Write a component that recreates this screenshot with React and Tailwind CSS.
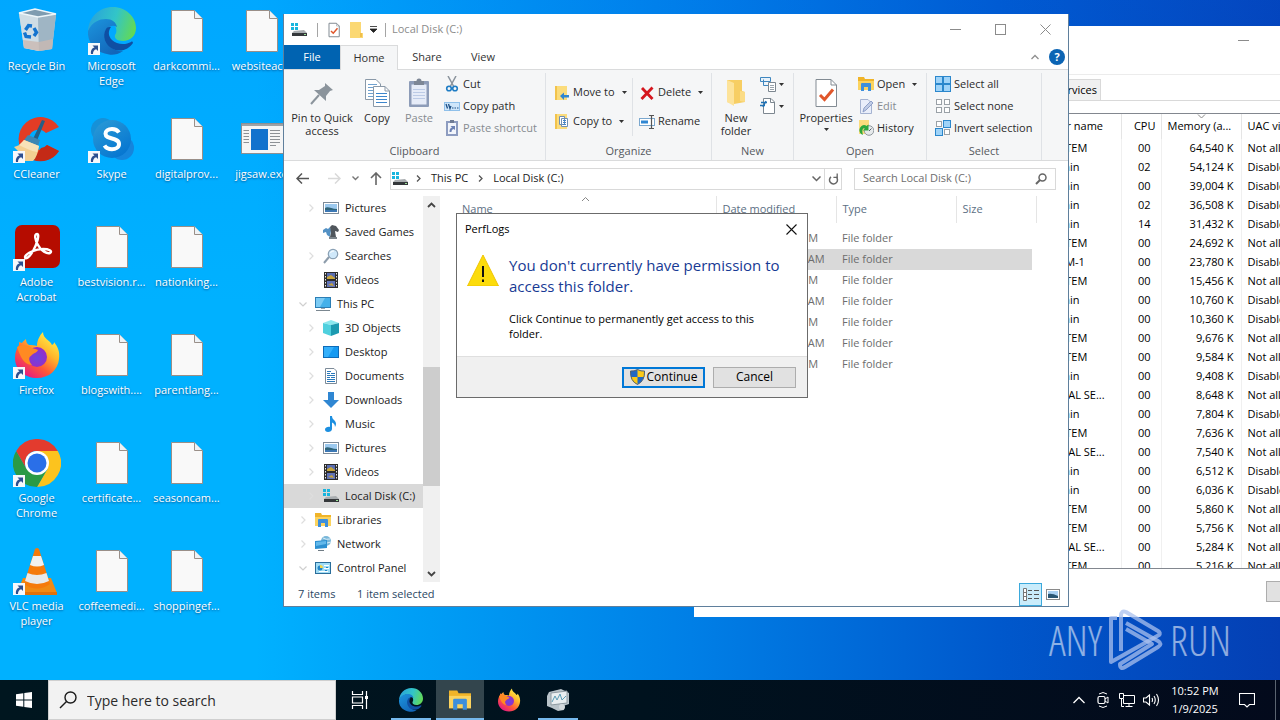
import React, { useState } from 'react';

const svgProps = { xmlns: 'http://www.w3.org/2000/svg', fill: 'none', 'aria-hidden': true };

/* ---------- desktop icons ---------- */

const RecycleBin = () => (
  <svg {...svgProps} width="48" height="48" viewBox="0 0 48 48">
    <path d="M6 6 L22 2 L43 7 L39 42 L26 44 L11 41 Z" fill="#b9cfdc" />
    <path d="M6 6 L25 10 L26 44 L11 41 Z" fill="#cfdde5" />
    <path d="M25 10 L43 7 L39 42 L26 44 Z" fill="#9fb5c4" />
    <path d="M10 33 L26 35 L40 32 L39 42 L26 44 L11 41 Z" fill="#c9b9b2" opacity=".8" />
    <path d="M6 6 L22 2 L43 7 L25 10 Z" fill="#7f9cb0" stroke="#eef6fa" strokeWidth="1.3" />
    <g stroke="#1474cf" strokeWidth="3.4">
      <path d="M12.500 23 L15.500 18.500 L19 19" />
      <path d="M21 21 L23.500 25.500 L21 29" />
      <path d="M18 30 L13 29.500 L11.500 25.500" />
    </g>
  </svg>
);

const EdgeLogo = ({ size = 48 }) => (
  <svg {...svgProps} width={size} height={size} viewBox="0 0 48 48">
    <defs>
      <linearGradient id="edgeTop" x1="4" y1="10" x2="46" y2="24" gradientUnits="userSpaceOnUse">
        <stop offset="0" stopColor="#2aa7d8" />
        <stop offset=".5" stopColor="#32c5c8" />
        <stop offset="1" stopColor="#62d957" />
      </linearGradient>
      <linearGradient id="edgeLeft" x1="4" y1="16" x2="26" y2="46" gradientUnits="userSpaceOnUse">
        <stop offset="0" stopColor="#1b8fd9" />
        <stop offset="1" stopColor="#1266b9" />
      </linearGradient>
    </defs>
    <path d="M0 24 C1 10 11 0 25 0 C38 0 48 10 48 21 C48 29 42 34 35 34 C29 34 26 31 27 28 C29 26 29 21 26 17 C21 11 8 11 0 24 Z" fill="url(#edgeTop)" />
    <path d="M0 24 C4 15 11 12 18 12 C24 12 28 15 29 20 C23 16 16 22 18 31 C20 40 28 45 35 44 C30 48 24 48 21 47.500 C8 46 -1 36 0 24 Z" fill="url(#edgeLeft)" />
    <path d="M18 22 C14 29 17 38 25 42 C33 46 41 42 45 36 C45 35 44 34 43 35 C38 38 29 38 24 33 C20 29 20 24 23 20 C21 20 19 20 18 22 Z" fill="#0f4fa3" />
  </svg>
);

const CCleaner = () => (
  <svg {...svgProps} width="48" height="48" viewBox="0 0 48 48">
    <path d="M46 12 A22 22 0 1 0 46 36 L34 30 A10 10 0 1 1 33 18 Z" fill="#e23c25" />
    <path d="M46 36 A22 22 0 0 1 20 45 L28 33 A10 10 0 0 0 34 30 Z" fill="#c42a17" />
    <path d="M29 5 L32 6 L23 28 L19 26 Z" fill="#245f86" />
    <path d="M15 20 L27 25 L25 31 L11 25 Z" fill="#3c87b4" />
    <path d="M11 25 L26 31 C25 38 23 43 20 46 L12 46 L5 36 L1 32 C5 31 9 29 11 25 Z" fill="#f3cf92" />
    <path d="M11 25 L26 31 L24 37 C18 36 12 33 6 30 Z" fill="#f8e2b8" />
  </svg>
);

const Skype = () => (
  <svg {...svgProps} width="48" height="48" viewBox="0 0 48 48">
    <defs>
      <linearGradient id="skypeFill" x1="10" y1="4" x2="38" y2="44" gradientUnits="userSpaceOnUse">
        <stop offset="0" stopColor="#2a9ad6" />
        <stop offset="1" stopColor="#0272d0" />
      </linearGradient>
    </defs>
    <circle cx="15" cy="15" r="12" fill="#1691d8" />
    <circle cx="34" cy="33" r="12" fill="#1585dc" />
    <circle cx="24" cy="24" r="19" fill="url(#skypeFill)" />
    <path d="M31 17.500 C29 14.500 26 14 24 14 C20 14 17.500 16 17.500 18.800 C17.500 25 31 22 31 29 C31 32.500 27.500 34.200 24 34.200 C20.500 34.200 18 33 16.500 30.500" stroke="#fff" strokeWidth="4" />
  </svg>
);

const Acrobat = () => (
  <svg {...svgProps} width="48" height="48" viewBox="0 0 48 48">
    <rect x="2" y="2" width="45" height="43" rx="7" fill="#b50c00" />
    <path d="M24 11 C21 11 22 17 25 22 C28 28 34 31 37 30 C40 28 36 26 30 26 C23 26 13 30 12 34 C12 37 16 35 20 28 C24 21 27 11 24 11 Z" stroke="#fff" strokeWidth="2.400" strokeLinejoin="round" />
  </svg>
);

const FirefoxLogo = ({ size = 48 }) => (
  <svg {...svgProps} width={size} height={size} viewBox="0 0 48 48">
    <defs>
      <linearGradient id="ffBody" x1="42" y1="6" x2="12" y2="46" gradientUnits="userSpaceOnUse">
        <stop offset="0" stopColor="#fff24a" />
        <stop offset=".35" stopColor="#ffb52b" />
        <stop offset=".65" stopColor="#ff5a36" />
        <stop offset="1" stopColor="#e31587" />
      </linearGradient>
      <radialGradient id="ffCore" cx="24" cy="27" r="11" gradientUnits="userSpaceOnUse">
        <stop offset="0" stopColor="#6a45e0" />
        <stop offset="1" stopColor="#9a2bc4" />
      </radialGradient>
    </defs>
    <path d="M30 1 C30 8 37 9 39 14 C41 13 41 12 41 11 C45 16 47 21 46 28 C45 39 36 47 24 47 C12 47 2 39 2 27 C2 21 4 17 6 14 L6 11 L9 12 C10 10 12 9 13 8 C13 11 14 13 16 14 C19 14 21 14 24 15 C24 9 27 4 30 1 Z" fill="url(#ffBody)" />
    <circle cx="24" cy="26" r="10" fill="url(#ffCore)" />
    <path d="M4 16 C10 13 16 14 19 17 C21 18 24 18 25 19 C24 22 20 22 18 25 C15 26 16 31 19 34 C11 34 7 25 4 16 Z" fill="#ff8a22" />
  </svg>
);

const ChromeLogo = () => (
  <svg {...svgProps} width="48" height="48" viewBox="0 0 48 48">
    <path d="M24 12 L44.800 12 A24 24 0 0 1 24 48 L34.400 30 Z" fill="#fcc31e" />
    <path d="M3.200 12 L13.600 30 L24 36 L34.400 30 L24 48 A24 24 0 0 1 3.200 12 Z" fill="#2a9a46" />
    <path d="M3.200 12 L13.600 30 A12 12 0 0 1 24 12 L44.800 12 A24 24 0 0 0 3.200 12 Z" fill="#e33b2e" />
    <circle cx="24" cy="24" r="12" fill="#fff" />
    <circle cx="24" cy="24" r="9.500" fill="#2a6fe8" />
  </svg>
);

const VlcLogo = () => (
  <svg {...svgProps} width="48" height="48" viewBox="0 0 48 48">
    <path d="M10 31 L38 31 L44 46 L4 46 Z" fill="#f08a14" />
    <path d="M4 45 H44 V48 H4 Z" fill="#e0710a" />
    <path d="M22 2 Q24 0 26 2 L37 37 Q24 46 11 37 Z" fill="#f57a0b" />
    <path d="M20 9 L28 9 L31 18 Q24 21 17 18 Z" fill="#f1f1f1" />
    <path d="M14.500 26 Q24 30 33.500 26 L36 34 Q24 40 12 34 Z" fill="#e9e9e9" />
  </svg>
);

const FilePage = () => (
  <svg {...svgProps} width="48" height="48" viewBox="0 0 48 48">
    <path d="M8.500 3.500 H31 L39.500 12 V44.500 H8.500 Z" fill="#f9f9f9" stroke="#9a8f88" />
    <path d="M31.500 3.500 V11.500 H39.500" fill="#eef2f5" stroke="#9a8f88" />
  </svg>
);

const ExeWindow = () => (
  <svg {...svgProps} width="48" height="48" viewBox="0 0 48 48">
    <rect x="3.500" y="8.500" width="42" height="30" fill="#f5f5f5" stroke="#8b8f93" />
    <path d="M4 9 H45 V11 H4 Z" fill="#9da2a6" />
    <rect x="13" y="14" width="17" height="21" fill="#1272cd" />
    <path d="M5.500 15.500 H11 M5.500 18.500 H11 M5.500 21.500 H11 M5.500 24.500 H11 M5.500 27.500 H11 M32 15.500 H42 M32 18.500 H42 M32 21.500 H42 M32 24.500 H42 M32 27.500 H42 M32 30.500 H38" stroke="#8d9195" />
  </svg>
);

const ShortcutArrow = () => (
  <svg {...svgProps} className="absolute bottom-0 left-0" width="12" height="12" viewBox="0 0 12 12">
    <rect width="12" height="12" fill="#f6f8fb" />
    <path d="M3 11 C2.500 7.500 4 5 6.500 4.500 L4.500 2.500 H10 V8 L8.200 6.200 C6 6.700 5 8.500 5 11 Z" fill="#2d4f8f" />
  </svg>
);

const desktopItems = [
  { name: 'Recycle Bin', icon: RecycleBin },
  { name: 'CCleaner', icon: CCleaner, shortcut: true },
  { name: 'Adobe\nAcrobat', icon: Acrobat, shortcut: true },
  { name: 'Firefox', icon: FirefoxLogo, shortcut: true },
  { name: 'Google\nChrome', icon: ChromeLogo, shortcut: true },
  { name: 'VLC media\nplayer', icon: VlcLogo, shortcut: true },
  { name: 'Microsoft\nEdge', icon: EdgeLogo, shortcut: true },
  { name: 'Skype', icon: Skype, shortcut: true },
  { name: 'bestvision.r...', icon: FilePage },
  { name: 'blogswith....', icon: FilePage },
  { name: 'certificate...', icon: FilePage },
  { name: 'coffeemedi...', icon: FilePage },
  { name: 'darkcommi...', icon: FilePage },
  { name: 'digitalprov...', icon: FilePage },
  { name: 'nationking...', icon: FilePage },
  { name: 'parentlang...', icon: FilePage },
  { name: 'seasoncam...', icon: FilePage },
  { name: 'shoppingef...', icon: FilePage },
  { name: 'websiteac...', icon: FilePage },
  { name: 'jigsaw.exe', icon: ExeWindow },
];

const DesktopIcons = () => (
  <div className="grid w-max auto-cols-[75px] grid-flow-col grid-rows-[repeat(6,108px)]">
    {desktopItems.map(({ name, icon: Icon, shortcut }) => (
      <button key={name} className="flex flex-col items-center pt-[7px] pr-0.5 text-[11px] leading-[15px] text-white">
        <span className="relative mb-[3px] block">
          <Icon />
          {shortcut && <ShortcutArrow />}
        </span>
        <span className="text-center whitespace-pre [text-shadow:0_1px_2px_rgba(0,30,80,0.6)]">{name}</span>
      </button>
    ))}
  </div>
);

/* ---------- explorer icons ---------- */

const Drive = () => (
  <svg {...svgProps} width="16" height="16" viewBox="0 0 16 16">
    <path d="M0 1 H3 V4 H0 Z M4 1 H7 V4 H4 Z M0 5 H3 V8 H0 Z M4 5 H7 V8 H4 Z" fill="#19b5de" />
    <path d="M3 9 L13 8 L16 11 H1 Z" fill="#a9adb0" />
    <path d="M1 11 H16 V14 H1 Z" fill="#35383b" />
    <path d="M13 12 H15 V13 H13 Z" fill="#9ce29a" />
  </svg>
);

const Picture = () => (
  <svg {...svgProps} width="16" height="16" viewBox="0 0 16 16">
    <rect x=".5" y="2.500" width="15" height="11" fill="#fff" stroke="#7d8b99" />
    <rect x="2" y="4" width="12" height="8" fill="#9cc9ee" />
    <path d="M2 8 C5 6 8 9 14 9 V12 H2 Z" fill="#2f6478" />
    <path d="M2 10 H14 V12 H2 Z" fill="#3c78b4" />
  </svg>
);

const Games = () => (
  <svg {...svgProps} width="16" height="16" viewBox="0 0 16 16">
    <path d="M0 6 L3 4 L5 5 L7 3 L8 6 L7 13 L4 11 L3 8 L0 9 Z" fill="#5391c4" />
    <path d="M7 3 L9 1 L13 2 L16 6 L15 8 L12 7 L13 13 H7 L8 9 Z" fill="#50565c" />
    <path d="M6 13 H14 V15 H6 Z" fill="#7c848a" />
  </svg>
);

const SearchesIcon = () => (
  <svg {...svgProps} width="16" height="16" viewBox="0 0 16 16">
    <path d="M1 15 L6 9" stroke="#8d9cab" strokeWidth="2" />
    <circle cx="10" cy="6" r="4.700" fill="#cfe8fa" stroke="#8aa0b4" strokeWidth="1.200" />
    <path d="M7.500 5 A3 3 0 0 1 11 3" stroke="#fff" />
  </svg>
);

const Film = () => (
  <svg {...svgProps} width="16" height="16" viewBox="0 0 16 16">
    <path d="M1 0 H15 V16 H1 Z" fill="#2c2c2c" />
    <path d="M4 1 H12 V7 H4 Z" fill="#5a6db0" />
    <path d="M4 9 H12 V15 H4 Z" fill="#6173b8" />
    <path d="M4 5 L8 3 L12 6 V7 H4 Z M5 13 L9 11 L11 14 Z" fill="#c7a53b" />
    <path d="M2.500 1 V16 M13.500 1 V16" stroke="#e9e9e9" strokeDasharray="1.500 1.500" />
  </svg>
);

const Monitor = () => (
  <svg {...svgProps} width="16" height="16" viewBox="0 0 16 16">
    <rect x=".5" y="1.500" width="15" height="10" fill="#46b1ea" stroke="#2c7eb5" />
    <path d="M1 2 H10 L5 11 H1 Z" fill="#7ccbf4" />
    <path d="M1 14.500 H15" stroke="#7b8790" />
    <path d="M6 12.500 H10" stroke="#9aa5ad" />
  </svg>
);

const Cube = () => (
  <svg {...svgProps} width="16" height="16" viewBox="0 0 16 16">
    <path d="M0 3 L8 0 L16 3 L8 5 Z" fill="#8ce8ee" />
    <path d="M0 3 L8 5 V16 L0 13 Z" fill="#4fd0de" />
    <path d="M8 5 L16 3 V13 L8 16 Z" fill="#1c9ab0" />
  </svg>
);

const DesktopGlyph = () => (
  <svg {...svgProps} width="16" height="16" viewBox="0 0 16 16">
    <rect x=".5" y="2.500" width="15" height="11" fill="#159af2" stroke="#0d6bb8" />
    <path d="M1 3 H11 L5 13 H1 Z" fill="#35b0fb" />
  </svg>
);

const DocumentGlyph = () => (
  <svg {...svgProps} width="16" height="16" viewBox="0 0 16 16">
    <path d="M2.500 .5 H11 L13.500 3 V15.500 H2.500 Z" fill="#fff" stroke="#7d8b99" />
    <path d="M4 3.500 H8 M4 5.500 H7 M8 5.500 H12 M4 7.500 H12 M4 9.500 H7 M8 9.500 H12 M4 11.500 H12 M4 13.500 H12" stroke="#2a79bb" />
  </svg>
);

const DownArrow = () => (
  <svg {...svgProps} width="16" height="16" viewBox="0 0 16 16">
    <path d="M5 0 H11 V8 H16 L8 16 L0 8 H5 Z" fill="#2f86d2" />
  </svg>
);

const Note = () => (
  <svg {...svgProps} width="16" height="16" viewBox="0 0 16 16">
    <path d="M7 0 H9 C9 4 13 4 13 8 C13 9 12.500 10 12 11 C12 8 10 7 9 6.500 V13 C9 15 7 16 5 16 C3 16 2 15 2 13.500 C2 11.500 5 10.500 7 11 Z" fill="#1c8fe0" />
  </svg>
);

const Folder = ({ size = 16 }) => (
  <svg {...svgProps} width={size} height={size} viewBox="0 0 16 16">
    <path d="M0 1 H6 L7 3 H16 V14 H0 Z" fill="#f0b429" />
    <path d="M0 5 H16 V14 H0 Z" fill="#fbd35f" />
    <path d="M3 8 Q3 7 4 7 H12 Q13 7 13 8 V15 H10 V11 H6 V15 H3 Z" fill="#3d8fdc" />
  </svg>
);

const NetworkGlyph = () => (
  <svg {...svgProps} width="16" height="16" viewBox="0 0 16 16">
    <circle cx="11" cy="5" r="5" fill="#79b7d9" />
    <path d="M8 2 Q11 4 15 3 M8 6 Q12 8 16 6" stroke="#d7edf8" />
    <path d="M0 5 L12 4 V12 L0 13 Z" fill="#2b8fd0" />
    <path d="M1 6 L11 5 V8 L1 10 Z" fill="#62b8ea" />
    <path d="M3 14.500 H9" stroke="#6f7b84" />
  </svg>
);

const ControlPanelGlyph = () => (
  <svg {...svgProps} width="16" height="16" viewBox="0 0 16 16">
    <rect x=".5" y="2.500" width="15" height="11" fill="#9fdcf5" stroke="#2a6d9a" />
    <circle cx="5" cy="8" r="2.500" fill="#2486c8" />
    <path d="M5 8 V5 A3 3 0 0 1 8 8 Z" fill="#f5d64a" />
    <path d="M9 5.500 H14 M9 8.500 H14 M4 11.500 H13" stroke="#fff" />
    <path d="M10 10.500 H12 M11 7.500 H13" stroke="#2486c8" />
  </svg>
);

const Chevron = ({ open }) => (
  <svg {...svgProps} className="w-2 shrink-0" width="8" height="8" viewBox="0 0 8 8">
    <path d={open ? 'M0.500 2.500 L4 6 L7.500 2.500' : 'M2.500 0.500 L6 4 L2.500 7.500'} stroke={open ? '#cfcfcf' : '#dedede'} strokeWidth="1.200" />
  </svg>
);

const Caret = ({ className = '' }) => (
  <svg {...svgProps} className={className} width="5" height="3" viewBox="0 0 5 3">
    <path d="M0 0 H5 L2.500 3 Z" fill="#333" />
  </svg>
);

/* ---------- ribbon icons ---------- */

const PinBig = () => (
  <svg {...svgProps} width="32" height="32" viewBox="0 0 32 32">
    <path d="M19 6 L27 13 L24 14 L20 19 L20 24 L8 13 L13 13 L19 9 Z" fill="#8b949c" />
    <path d="M13 18 L5 27" stroke="#8b949c" strokeWidth="2" />
  </svg>
);

const CopyBig = () => (
  <svg {...svgProps} width="32" height="32" viewBox="0 0 32 32">
    <path d="M4.500 2.500 H15 L19.500 7 V22.500 H4.500 Z" fill="#fff" stroke="#8a99a8" />
    <path d="M7 7.500 H16 M7 10.500 H16 M7 13.500 H13 M7 16.500 H13 M7 19.500 H13" stroke="#6fa1cf" />
    <path d="M12.500 9.500 H24 L28.500 14 V29.500 H12.500 Z" fill="#fff" stroke="#8a99a8" />
    <path d="M24 9.500 V14 H28.500" stroke="#8a99a8" />
    <path d="M15 16.500 H26 M15 19.500 H26 M15 22.500 H26 M15 25.500 H26" stroke="#3d86cc" />
  </svg>
);

const PasteBig = () => (
  <svg {...svgProps} width="32" height="32" viewBox="0 0 32 32">
    <rect x="6" y="4" width="20" height="26" rx="1" fill="#8d9cb8" />
    <path d="M8.500 7.500 H23.500 V27.500 H8.500 Z" fill="#e6ecf8" />
    <path d="M11 4 H13.500 A2.500 2.500 0 0 1 18.500 4 H21 V8 H11 Z" fill="#7d8796" />
    <path d="M10 12.500 H22 M10 15.500 H22 M10 18.500 H22 M10 21.500 H22" stroke="#bccbe6" />
  </svg>
);

const Scissors = () => (
  <svg {...svgProps} width="16" height="16" viewBox="0 0 16 16">
    <path d="M4 0 L10 11 M12 0 L6 11" stroke="#8a939c" strokeWidth="1.500" />
    <circle cx="5" cy="12.500" r="2.300" stroke="#1e7cc4" strokeWidth="1.600" />
    <circle cx="11" cy="12.500" r="2.300" stroke="#1e7cc4" strokeWidth="1.600" />
  </svg>
);

const CopyPath = () => (
  <svg {...svgProps} width="16" height="16" viewBox="0 0 16 16">
    <rect x=".5" y="4.500" width="15" height="8" fill="#cfe6fa" stroke="#8fc0ea" />
    <path d="M2 6 L3.500 10.500 M4.500 6 L6 10.500 L7 8" stroke="#1b4f86" strokeWidth="1.300" />
    <path d="M8 10 H9.500 M10.500 10 H12 M13 10 H14.500" stroke="#1b4f86" />
  </svg>
);

const PasteShortcut = () => (
  <svg {...svgProps} width="16" height="16" viewBox="0 0 16 16">
    <path d="M2 1 H14 V16 H2 Z" fill="#8d9cc0" />
    <path d="M4 3 H12 V14 H4 Z" fill="#f2f5fb" />
    <path d="M6 0 H10 V3 H6 Z" fill="#6f7b93" />
    <path d="M5.500 12 C5.500 9 6.500 8 8 7.500 L6.500 6 H11 V10 L9.500 9 C8 9.500 7.500 10.500 7.500 12 Z" fill="#6d82b4" />
  </svg>
);

const MoveTo = () => (
  <svg {...svgProps} width="16" height="16" viewBox="0 0 16 16">
    <path d="M1 1 H13 V15 H1 Z" fill="#fbdc7c" />
    <path d="M1 1 H3 V15 H1 Z" fill="#f2c34c" />
    <path d="M6 11 L10 7.500 V10 H15 V12.500 H10 V15 Z" fill="#2f86d2" />
  </svg>
);

const CopyTo = () => (
  <svg {...svgProps} width="16" height="16" viewBox="0 0 16 16">
    <path d="M1 0 H13 V15 H1 Z" fill="#fbdc7c" />
    <path d="M1 0 H3 V15 H1 Z" fill="#f2c34c" />
    <path d="M5.500 2.500 H10.500 V10.500 H5.500 Z M7.500 4.500 H13.500 V12.500 H7.500 Z" fill="#fff" stroke="#6f8fb5" />
    <path d="M9 6.500 H12 M9 8.500 H12 M9 10.500 H12" stroke="#4486c6" />
  </svg>
);

const DeleteX = () => (
  <svg {...svgProps} width="16" height="16" viewBox="0 0 16 16">
    <path d="M3 3 L13.500 14 M13.500 2.500 L2.500 14" stroke="#d5161e" strokeWidth="2.800" />
  </svg>
);

const RenameGlyph = () => (
  <svg {...svgProps} width="16" height="16" viewBox="0 0 16 16">
    <rect x=".5" y="4.500" width="15" height="7" fill="#fff" stroke="#7ba8cf" />
    <path d="M2 6.500 H9 V9.500 H2 Z" fill="#2f86d2" />
    <path d="M12.500 1.500 V14.500 M10 1.500 H15 M10 14.500 H15" stroke="#555" strokeWidth="1.200" />
  </svg>
);

const NewFolder = () => (
  <svg {...svgProps} width="32" height="32" viewBox="0 0 32 32">
    <path d="M7 3 H22 V14 L25 15 V25 L14 27 L7 25 Z" fill="#f7ce63" />
    <path d="M7 3 L14 6 V29 L7 25 Z" fill="#fde39a" />
    <path d="M20 14 L25 15 V25 L20 24 Z" fill="#fbdc86" />
  </svg>
);

const NewItem = () => (
  <svg {...svgProps} width="16" height="16" viewBox="0 0 16 16">
    <path d="M.5 1.500 H10.500 V5.500 H.5 Z M3.500 3.500 V9.500 H8" fill="#e9f3fb" stroke="#3f86bf" />
    <path d="M8.500 6.500 H15.500 V15.500 H8.500 Z" fill="#fff" stroke="#7d8790" />
    <path d="M10 9.500 H14 M10 11.500 H14 M10 13.500 H14" stroke="#9aa4ad" />
  </svg>
);

const EasyAccess = () => (
  <svg {...svgProps} width="16" height="16" viewBox="0 0 16 16">
    <path d="M3.500 .5 H11 L14.500 4 V15.500 H3.500 Z" fill="#fff" stroke="#7d8790" />
    <path d="M10.500 .5 V4.500 H14.500" stroke="#7d8790" />
    <path d="M1 4.500 H7 M0 7.500 H5 M6 3 L3 9" stroke="#2273b5" strokeWidth="1.400" />
  </svg>
);

const CheckPage = ({ size = 16 }) => (
  <svg {...svgProps} width={size} height={size} viewBox="0 0 32 32">
    <path d="M6 2.500 H21 L26.500 8 V29.500 H6 Z" fill="#fff" stroke="#828b93" strokeWidth={size > 20 ? 1 : 2} />
    <path d="M21 2.500 V8 H26.500" stroke="#828b93" />
    <path d="M10 18 L14.500 22.500 L23 12.500" stroke="#e0562b" strokeWidth="3" />
  </svg>
);

const EditGlyph = () => (
  <svg {...svgProps} width="16" height="16" viewBox="0 0 16 16">
    <path d="M2.500 1.500 H10 L13.500 5 V15.500 H2.500 Z" fill="#e9eefa" stroke="#a5b3d1" />
    <path d="M5 14 L6 10 L13 3 L15 5 L8 12 Z" fill="#c0cce6" stroke="#8fa0c8" />
  </svg>
);

const HistoryGlyph = () => (
  <svg {...svgProps} width="16" height="16" viewBox="0 0 16 16">
    <path d="M1 0 H11 V14 H1 Z" fill="#fbdc7c" />
    <circle cx="11" cy="10.500" r="4.800" fill="#e6e9eb" stroke="#8d969c" />
    <path d="M11 11 L13.500 8.500" stroke="#55606a" />
    <path d="M1.500 9 C3 4.500 7 4 8.500 6 L10.500 4.500 V10.500 H5 L7 8.500 C5 7.500 3.500 10 5 15 C2 14 1 11 1.500 9 Z" fill="#2ea83c" />
  </svg>
);

// four squares, `on` says which ones are filled
const Squares = ({ on }) => (
  <svg {...svgProps} width="16" height="16" viewBox="0 0 16 16">
    {[[0, 0], [8, 0], [0, 8], [8, 8]].map(([x, y], i) =>
      on[i] ? (
        <rect key={i} x={x + 0.5} y={y + 0.5} width="7" height="7" fill="#9fd3f8" stroke="#2b87cc" />
      ) : (
        <rect key={i} x={x + 1.5} y={y + 1.5} width="5" height="5" fill="#fff" stroke="#9aa1a7" />
      )
    )}
  </svg>
);

/* ---------- ribbon ---------- */

const RibbonGroup = ({ label, className, children }) => (
  <div className={`flex flex-col border-r border-[#dfe2e6] ${className}`}>
    <div className="flex h-[70px] items-start">{children}</div>
    <div className="text-center leading-4 text-[#55595e]">{label}</div>
  </div>
);

const BigButton = ({ icon, label, caret, className = '' }) => (
  <button className={`flex flex-col items-center pt-1 leading-[13px] ${className}`}>
    {icon}
    <span className="mt-0.5 text-center whitespace-pre-line">{label}</span>
    {caret && <Caret className="mt-1" />}
  </button>
);

const SmallButton = ({ icon, label, caret, muted }) => (
  <button className={`flex h-[22px] items-center gap-[3px] whitespace-nowrap ${muted ? 'text-[#868b91]' : ''}`}>
    {icon}
    {label}
    {caret && <Caret className="ml-1" />}
  </button>
);

const Ribbon = () => (
  <div className="flex h-[92px] border-y border-[#dadbdc] bg-[#f5f6f7] pt-[3px] text-[#2b2b2b]">
    <RibbonGroup label="Clipboard" className="w-[262px]">
      <BigButton className="w-[76px]" icon={<PinBig />} label={'Pin to Quick\naccess'} />
      <BigButton className="w-[34px]" icon={<CopyBig />} label="Copy" />
      <BigButton className="w-[50px] text-[#868b91]" icon={<PasteBig />} label="Paste" />
      <div className="flex flex-col">
        <SmallButton icon={<Scissors />} label="Cut" />
        <SmallButton icon={<CopyPath />} label="Copy path" />
        <SmallButton icon={<PasteShortcut />} label="Paste shortcut" muted />
      </div>
    </RibbonGroup>
    <RibbonGroup label="Organize" className="w-[166px]">
      <div className="mt-[5px] flex h-[58px] w-[87px] flex-col justify-around border-r border-[#dfe2e6] pl-2">
        <SmallButton icon={<MoveTo />} label="Move to" caret />
        <SmallButton icon={<CopyTo />} label="Copy to" caret />
      </div>
      <div className="mt-[5px] flex h-[58px] flex-col justify-around pl-1.5">
        <SmallButton icon={<DeleteX />} label="Delete" caret />
        <SmallButton icon={<RenameGlyph />} label="Rename" />
      </div>
    </RibbonGroup>
    <RibbonGroup label="New" className="w-[82px]">
      <BigButton className="w-[48px]" icon={<NewFolder />} label={'New\nfolder'} />
      <div className="flex flex-col">
        <button aria-label="New item" className="flex h-[22px] items-center gap-[3px]"><NewItem /><Caret /></button>
        <button aria-label="Easy access" className="flex h-[22px] items-center gap-[3px]"><EasyAccess /><Caret /></button>
      </div>
    </RibbonGroup>
    <RibbonGroup label="Open" className="w-[133px]">
      <BigButton className="w-[64px]" icon={<CheckPage size={32} />} label="Properties" caret />
      <div className="flex flex-col">
        <SmallButton icon={<Folder />} label="Open" caret />
        <SmallButton icon={<EditGlyph />} label="Edit" muted />
        <SmallButton icon={<HistoryGlyph />} label="History" />
      </div>
    </RibbonGroup>
    <RibbonGroup label="Select" className="w-[115px]">
      <div className="flex flex-col pl-2">
        <SmallButton icon={<Squares on={[1, 1, 1, 1]} />} label="Select all" />
        <SmallButton icon={<Squares on={[0, 0, 0, 0]} />} label="Select none" />
        <SmallButton icon={<Squares on={[0, 1, 1, 0]} />} label="Invert selection" />
      </div>
    </RibbonGroup>
  </div>
);

/* ---------- explorer ---------- */

const treeItems = [
  { name: 'Pictures', icon: Picture, level: 2, arrow: true },
  { name: 'Saved Games', icon: Games, level: 2 },
  { name: 'Searches', icon: SearchesIcon, level: 2, arrow: true },
  { name: 'Videos', icon: Film, level: 2 },
  { name: 'This PC', icon: Monitor, level: 1, arrow: true, open: true },
  { name: '3D Objects', icon: Cube, level: 2, arrow: true },
  { name: 'Desktop', icon: DesktopGlyph, level: 2, arrow: true },
  { name: 'Documents', icon: DocumentGlyph, level: 2, arrow: true },
  { name: 'Downloads', icon: DownArrow, level: 2, arrow: true },
  { name: 'Music', icon: Note, level: 2, arrow: true },
  { name: 'Pictures', icon: Picture, level: 2, arrow: true },
  { name: 'Videos', icon: Film, level: 2, arrow: true },
  { name: 'Local Disk (C:)', icon: Drive, level: 2, arrow: true, selected: true },
  { name: 'Libraries', icon: Folder, level: 1, arrow: true },
  { name: 'Network', icon: NetworkGlyph, level: 1, arrow: true },
  { name: 'Control Panel', icon: ControlPanelGlyph, level: 1, arrow: true, open: true },
];

const fileRows = [
  { date: '12/7/2023 2:14 PM' },
  { date: '12/7/2019 10:14 AM', selected: true },
  { date: '12/7/2023 2:16 PM' },
  { date: '10/6/2023 11:30 AM' },
  { date: '12/7/2023 2:31 PM' },
  { date: '10/6/2023 11:42 AM' },
  { date: '12/7/2023 2:48 PM' },
];

const ScrollArrow = ({ up }) => (
  <svg {...svgProps} width="9" height="6" viewBox="0 0 9 6">
    <path d={up ? 'M1 5 L4.500 1.500 L8 5' : 'M1 1 L4.500 4.500 L8 1'} stroke="#444" strokeWidth="1.800" />
  </svg>
);

const Explorer = () => {
  const [query, setQuery] = useState('');

  return (
    <section className="absolute top-[14px] left-[283px] flex h-[593px] w-[786px] flex-col border border-t-0 border-[#5f7f9c] bg-white text-[11px] text-[#1b1b1b]">
      <header className="flex h-[31px] items-center pl-[7px] text-[#8b8b8b]">
        <Drive />
        <span className="mr-2 ml-2.5 h-3.5 border-l border-[#a5a5a5]" />
        <CheckPage />
        <svg {...svgProps} className="ml-1.5" width="16" height="16" viewBox="0 0 16 16">
          <path d="M2 0 H13 V11 H15 V16 H2 Z" fill="#fbd873" />
          <path d="M12 11 H14 V15 H12 Z" fill="#f0bf4b" />
        </svg>
        <svg {...svgProps} className="ml-1.5" width="7" height="7" viewBox="0 0 7 7">
          <path d="M0 .5 H7 M0 3 H7 L3.500 6.500 Z" stroke="#222" fill="#222" strokeWidth=".8" />
        </svg>
        <span className="mr-1.5 ml-2 h-3.5 border-l border-[#a5a5a5]" />
        <h1>Local Disk (C:)</h1>
        <div className="ml-auto flex">
          <button aria-label="Minimize" className="flex h-[30px] w-[45px] items-center justify-center">
            <svg {...svgProps} width="11" height="11" viewBox="0 0 11 11"><path d="M0 5.500 H11" stroke="#8b8b8b" /></svg>
          </button>
          <button aria-label="Maximize" className="flex h-[30px] w-[45px] items-center justify-center">
            <svg {...svgProps} width="11" height="11" viewBox="0 0 11 11"><rect x=".5" y=".5" width="10" height="10" stroke="#8b8b8b" /></svg>
          </button>
          <button aria-label="Close" className="flex h-[30px] w-[45px] items-center justify-center">
            <svg {...svgProps} width="11" height="11" viewBox="0 0 11 11"><path d="M.5 .5 L10.500 10.500 M10.500 .5 L.5 10.500" stroke="#8b8b8b" /></svg>
          </button>
        </div>
      </header>

      <nav className="flex h-6 items-stretch text-[#333]">
        <button className="w-14 bg-[#0063b1] text-white">File</button>
        <button className="relative -mb-px w-[58px] border border-b-0 border-[#dadbdc] bg-[#f5f6f7]">Home</button>
        <button className="w-[58px]">Share</button>
        <button className="w-[54px]">View</button>
        <div className="ml-auto flex items-center gap-2.5 pr-[3px]">
          <button aria-label="Collapse ribbon">
            <svg {...svgProps} width="8" height="6" viewBox="0 0 8 6"><path d="M.5 5 L4 1.500 L7.500 5" stroke="#8f8f8f" strokeWidth="1.300" /></svg>
          </button>
          <button className="flex h-4 w-4 items-center justify-center rounded-full bg-[#0b64b4] font-bold text-white">?</button>
        </div>
      </nav>

      <Ribbon />

      <div className="flex h-[35px] items-center pr-3 pl-3">
        <button aria-label="Back" className="w-8">
          <svg {...svgProps} width="13" height="11" viewBox="0 0 13 11"><path d="M6 .5 L1 5.500 L6 10.500 M1 5.500 H13" stroke="#555" strokeWidth="1.500" /></svg>
        </button>
        <button aria-label="Forward" className="w-6">
          <svg {...svgProps} width="13" height="11" viewBox="0 0 13 11"><path d="M7 .5 L12 5.500 L7 10.500 M12 5.500 H0" stroke="#d9d9d9" strokeWidth="1.500" /></svg>
        </button>
        <button aria-label="Recent locations" className="w-[18px]">
          <svg {...svgProps} width="7" height="5" viewBox="0 0 7 5"><path d="M.5 .5 L3.500 3.500 L6.500 .5" stroke="#777" strokeWidth="1.400" /></svg>
        </button>
        <button aria-label="Up" className="w-5">
          <svg {...svgProps} width="12" height="13" viewBox="0 0 12 13"><path d="M1 6 L6 1 L11 6 M6 1 V13" stroke="#666" strokeWidth="1.600" /></svg>
        </button>
        <div className="flex h-[22px] flex-1 items-center border border-[#d9d9d9] pl-px">
          <Drive />
          <button className="ml-2 flex items-center gap-2.5">
            <svg {...svgProps} width="5" height="7" viewBox="0 0 5 7"><path d="M1 .5 L4 3.500 L1 6.500" stroke="#555" strokeWidth="1.300" /></svg>
            This PC
          </button>
          <button className="ml-2.5 flex items-center gap-2.5">
            <svg {...svgProps} width="5" height="7" viewBox="0 0 5 7"><path d="M1 .5 L4 3.500 L1 6.500" stroke="#555" strokeWidth="1.300" /></svg>
            Local Disk (C:)
          </button>
          <button aria-label="Previous locations" className="ml-auto w-4 pl-1">
            <svg {...svgProps} width="9" height="6" viewBox="0 0 9 6"><path d="M.5 .5 L4.500 4.500 L8.500 .5" stroke="#666" strokeWidth="1.500" /></svg>
          </button>
          <button aria-label="Refresh" className="flex h-full w-[17px] items-center justify-center border-l border-[#d9d9d9]">
            <svg {...svgProps} width="11" height="12" viewBox="0 0 11 12">
              <path d="M8.200 4 A4 4 0 1 1 3 3.800" stroke="#666" strokeWidth="1.500" />
              <path d="M9.200 .5 V4.300 H5.400" stroke="#666" strokeWidth="1.300" />
            </svg>
          </button>
        </div>
        <label className="ml-3 flex h-[22px] w-[202px] items-center border border-[#d9d9d9] px-2 text-[#6d6d6d]">
          <input
            aria-label="Search Local Disk (C:)"
            className="min-w-0 flex-1 bg-transparent outline-none placeholder:text-[#6d6d6d]"
            placeholder="Search Local Disk (C:)"
            value={query}
            onChange={(e) => setQuery(e.target.value)}
          />
          <svg {...svgProps} width="12" height="12" viewBox="0 0 12 12">
            <circle cx="7.500" cy="4.500" r="3.500" stroke="#666" strokeWidth="1.500" />
            <path d="M5 7 L1 11" stroke="#666" strokeWidth="2" />
          </svg>
        </label>
      </div>

      <div className="flex min-h-0 flex-1">
        <ul className="w-[139px] overflow-hidden">
          {treeItems.map(({ name, icon: Icon, level, arrow, open, selected }, i) => (
            <li key={i}>
              <button className={`flex h-6 w-full items-center whitespace-nowrap ${level === 1 ? 'pl-[15px]' : 'pl-[23px]'} ${selected ? 'bg-[#d9d9d9]' : ''}`}>
                <span className="mr-2 flex w-2">{arrow && <Chevron open={open} />}</span>
                <Icon />
                <span className="ml-1.5">{name}</span>
              </button>
            </li>
          ))}
        </ul>
        <div className="flex w-[17px] flex-col items-center bg-[#f0f0f0]">
          <button aria-label="Scroll up" className="flex h-[17px] items-center"><ScrollArrow up /></button>
          <div className="mt-auto mb-[79px] h-[119px] w-full bg-[#cdcdcd]" />
          <button aria-label="Scroll down" className="flex h-[17px] items-center"><ScrollArrow /></button>
        </div>

        <div className="relative min-w-0 flex-1 pl-4">
          <svg {...svgProps} className="absolute top-0 left-[141px]" width="9" height="6" viewBox="0 0 9 6"><path d="M1 5 L4.500 1.500 L8 5" stroke="#888" /></svg>
          <table className="w-[580px] table-fixed">
            <thead>
              <tr className="h-[27px] text-left text-[#5c6f84]">
                <th className="w-[260px] border-r border-[#e5e5e5] pl-1.5 font-normal">Name</th>
                <th className="w-[120px] border-r border-[#e5e5e5] pl-1.5 font-normal">Date modified</th>
                <th className="w-[120px] border-r border-[#e5e5e5] pl-1.5 font-normal">Type</th>
                <th className="w-[80px] border-r border-[#e5e5e5] pl-1.5 font-normal">Size</th>
              </tr>
            </thead>
          </table>
          <table className="mt-[5px] w-[576px] table-fixed text-[#6d6d6d]">
            <tbody>
              {fileRows.map((row, i) => (
                <tr key={i} className={`h-[21px] ${row.selected ? 'bg-[#d9d9d9]' : ''}`}>
                  <td className="w-[260px]" />
                  <td className="w-[120px] pl-1.5 whitespace-nowrap">{row.date}</td>
                  <td className="w-[120px] pl-1.5">File folder</td>
                  <td />
                </tr>
              ))}
            </tbody>
          </table>
        </div>
      </div>

      <footer className="flex h-6 items-center pl-3.5 text-[#2b4763]">
        <span className="w-[59px]">7 items</span>
        <span>1 item selected</span>
        <div className="ml-auto flex items-center pr-2">
          <button aria-label="Details view" className="flex h-[23px] w-[23px] items-center justify-center border border-[#3ba9dc] bg-[#c9ecfb]">
            <svg {...svgProps} width="16" height="13" viewBox="0 0 16 13">
              <path d="M.5 .5 H3.500 V12.500 H.5 Z M.5 4.500 H3.500 M.5 8.500 H3.500" fill="#fff" stroke="#777" />
              <path d="M5 2.500 H9 M11 2.500 H16 M5 6.500 H9 M11 6.500 H16 M5 10.500 H9 M11 10.500 H16" stroke="#555" />
            </svg>
          </button>
          <button aria-label="Large icons view" className="ml-1">
            <svg {...svgProps} width="14" height="11" viewBox="0 0 14 11">
              <rect x=".5" y=".5" width="13" height="10" fill="#fff" stroke="#8a8a8a" />
              <path d="M2 2 H12 V9 H2 Z" fill="#a9d0f2" />
              <path d="M2 5 Q6 4 12 7 V9 H2 Z" fill="#2a5673" />
            </svg>
          </button>
        </div>
      </footer>
    </section>
  );
};

/* ---------- task manager ---------- */

const processes = [
  ['SYSTEM', '00', '64,540 K', 'Not allowed'],
  ['admin', '02', '54,124 K', 'Disabled'],
  ['admin', '00', '39,004 K', 'Disabled'],
  ['admin', '02', '36,508 K', 'Disabled'],
  ['admin', '14', '31,432 K', 'Disabled'],
  ['SYSTEM', '00', '24,692 K', 'Not allowed'],
  ['DWM-1', '00', '23,780 K', 'Disabled'],
  ['SYSTEM', '00', '15,456 K', 'Not allowed'],
  ['admin', '00', '10,760 K', 'Disabled'],
  ['admin', '00', '10,360 K', 'Disabled'],
  ['SYSTEM', '00', '9,676 K', 'Not allowed'],
  ['SYSTEM', '00', '9,584 K', 'Not allowed'],
  ['admin', '00', '9,408 K', 'Disabled'],
  ['LOCAL SE...', '00', '8,648 K', 'Not allowed'],
  ['admin', '00', '7,804 K', 'Disabled'],
  ['SYSTEM', '00', '7,636 K', 'Not allowed'],
  ['LOCAL SE...', '00', '7,540 K', 'Not allowed'],
  ['admin', '00', '6,512 K', 'Disabled'],
  ['admin', '00', '6,036 K', 'Disabled'],
  ['SYSTEM', '00', '5,860 K', 'Not allowed'],
  ['SYSTEM', '00', '5,756 K', 'Not allowed'],
  ['LOCAL SE...', '00', '5,284 K', 'Not allowed'],
  ['SYSTEM', '00', '5,216 K', 'Not allowed'],
];

const TaskManager = () => (
  <section className="absolute top-[26px] right-0 left-[694px] flex h-[591px] flex-col overflow-hidden bg-white text-[11px] text-black">
    <header className="flex h-[49px] items-start justify-end border-b border-[#ececec] pr-[31px]">
      <button aria-label="Minimize" className="mt-3">
        <svg {...svgProps} width="11" height="5" viewBox="0 0 11 5"><path d="M0 2.500 H11" stroke="#8b8b8b" /></svg>
      </button>
    </header>
    <div className="flex h-[26px] items-end border-b border-[#d9d9d9] pl-[350px]">
      <button className="h-[21px] w-[57px] border border-b-0 border-[#d9d9d9] bg-[#f0f0f0] pr-[3px] text-right">Services</button>
    </div>
    <div className="relative mt-3 ml-3 h-[456px] overflow-hidden border-y border-[#82878f]">
      <svg {...svgProps} className="absolute top-0 left-[491px]" width="9" height="5" viewBox="0 0 9 5"><path d="M1 .5 L4.500 4 L8 .5" stroke="#888" /></svg>
      <table className="ml-[335px] w-[340px] table-fixed">
        <thead>
          <tr className="h-[25px] text-left">
            <th className="w-20 border-r border-[#e5e5e5] pl-1.5 font-normal">User name</th>
            <th className="w-10 border-r border-[#e5e5e5] pr-[5px] text-right font-normal">CPU</th>
            <th className="w-20 border-r border-[#e5e5e5] pl-1.5 font-normal whitespace-nowrap">Memory (a...</th>
            <th className="pl-1.5 font-normal whitespace-nowrap">UAC virtualization</th>
          </tr>
        </thead>
        <tbody>
          {processes.map(([user, cpu, memory, uac], i) => (
            <tr key={i} className="h-[19px] whitespace-nowrap">
              <td className="border-r border-[#f0f0f0] pl-1.5">{user}</td>
              <td className="border-r border-[#f0f0f0] pr-2.5 text-right">{cpu}</td>
              <td className="border-r border-[#f0f0f0] pr-[7px] text-right">{memory}</td>
              <td className="pl-1.5">{uac}</td>
            </tr>
          ))}
        </tbody>
      </table>
    </div>
    <div className="mt-3 flex justify-end">
      <button aria-label="End process" className="h-[21px] w-3.5 border border-r-0 border-[#adadad] bg-[#e1e1e1]" />
    </div>
  </section>
);

/* ---------- permission dialog ---------- */

const Shield = () => (
  <svg {...svgProps} width="15" height="16" viewBox="0 0 15 16">
    <path d="M7.500 .5 Q11 2.500 14.500 2 Q15 12 7.500 15.500 Q0 12 .5 2 Q4 2.500 7.500 .5 Z" fill="#1f67c4" />
    <path d="M7.500 .5 Q11 2.500 14.500 2 L14.500 8 H7.500 Z M.7 8 H7.500 V15.500 Q1.500 12.500 .7 8 Z" fill="#fbc916" />
    <path d="M7.500 .5 Q11 2.500 14.500 2 Q15 12 7.500 15.500 Q0 12 .5 2 Q4 2.500 7.500 .5 Z" stroke="#4f5f70" />
  </svg>
);

const PermissionDialog = () => (
  <section role="dialog" className="absolute top-[213px] left-[456px] flex h-[185px] w-[352px] flex-col border border-[#6b6b6b] bg-white text-[11px] text-black">
    <header className="flex h-[30px] items-center justify-between pr-2.5 pl-2">
      <h2>PerfLogs</h2>
      <button aria-label="Close">
        <svg {...svgProps} width="11" height="11" viewBox="0 0 11 11"><path d="M.5 .5 L10.500 10.500 M10.500 .5 L.5 10.500" stroke="#111" strokeWidth="1.100" /></svg>
      </button>
    </header>
    <div className="flex flex-1 gap-2.5 pt-2.5 pr-5 pl-2.5">
      <svg {...svgProps} className="shrink-0" width="32" height="32" viewBox="0 0 32 32">
        <path d="M16 1 L31.500 32 H.5 Z" fill="#fcdc0c" stroke="#efc400" />
        <path d="M16 12 V23 M16 25.500 V28" stroke="#111" strokeWidth="2" />
      </svg>
      <div className="pt-px">
        <p className="text-[15px] leading-[21px] text-[#173a94]">You don't currently have permission to access this folder.</p>
        <p className="mt-3.5 leading-[15px]">Click Continue to permanently get access to this<br />folder.</p>
      </div>
    </div>
    <footer className="flex h-[41px] items-center justify-end gap-2 border-t border-[#dfdfdf] bg-[#f0f0f0] pr-[11px]">
      <button className="flex h-[21px] w-[83px] items-center justify-center gap-0.5 border-2 border-[#0078d7] bg-[#e1e1e1] text-[12px]">
        <Shield />
        Continue
      </button>
      <button className="flex h-[21px] w-[83px] items-center justify-center border border-[#adadad] bg-[#e1e1e1] text-[12px]">Cancel</button>
    </footer>
  </section>
);

/* ---------- watermark and taskbar ---------- */

const Watermark = () => (
  <div className="absolute right-[49px] bottom-2 flex h-16 items-center gap-1.5 font-['Open_Sans_Condensed_Light','Roboto_Condensed_Light','Liberation_Sans_Narrow',sans-serif] text-[42px] leading-none font-light text-white/55">
    <span>ANY</span>
    <svg {...svgProps} width="56" height="64" viewBox="0 0 56 64">
      <g stroke="#a9c0ee" strokeOpacity=".75" strokeWidth="4" strokeLinejoin="round">
        <path d="M9 10 H3 V54 L12 49 L51 27 Q53 25 50 23 L18 4 Q13 2 13 8 V43" />
        <path d="M18 15 L50 33 Q55 36 50 39 L17 59 Q12 62 12 56 L44 36 L18 21" />
      </g>
    </svg>
    <span>RUN</span>
  </div>
);

const TaskButton = ({ label, active, running, children }) => (
  <button aria-label={label} className={`relative flex h-10 w-12 items-center justify-center ${active ? 'bg-[#33454d]' : ''}`}>
    {children}
    {running && <span className={`absolute bottom-0 h-0.5 bg-[#76b9ed] ${active ? 'inset-x-0' : 'inset-x-1'}`} />}
  </button>
);

const Taskbar = () => (
  <footer className="flex h-10 shrink-0 bg-linear-to-r from-[#00161f] via-[#00121e] to-[#030a1c] text-white">
    <button aria-label="Start" className="flex w-12 items-center justify-center">
      <svg {...svgProps} width="16" height="16" viewBox="0 0 16 16">
        <path d="M0 2.200 L7.300 1.200 V7.500 H0 Z M8.300 1 L16 0 V7.500 H8.300 Z M0 8.500 H7.300 V14.800 L0 13.800 Z M8.300 8.500 H16 V16 L8.300 15 Z" fill="#fff" />
      </svg>
    </button>
    <label className="flex w-72 items-center border border-[#cfcfcf] bg-[#f2f2f2] pl-2.5">
      <svg {...svgProps} width="18" height="18" viewBox="0 0 18 18">
        <circle cx="11.500" cy="6.500" r="5.500" stroke="#1b1b1b" strokeWidth="1.400" />
        <path d="M7.500 10.500 L1 17" stroke="#1b1b1b" strokeWidth="1.400" />
      </svg>
      <input aria-label="Type here to search" placeholder="Type here to search" className="ml-2.5 min-w-0 flex-1 bg-transparent text-[14px] text-black outline-none placeholder:text-[#2b2b2b]" />
    </label>
    <div className="flex gap-px">
      <TaskButton label="Task view">
        <svg {...svgProps} width="18" height="18" viewBox="0 0 18 18">
          <path d="M1.500 0 V3.500 H11.500 V0 M1.500 18 V14.500 H11.500 V18 M1.500 6 H11.500 V12 H1.500 Z M15.500 0 V18" stroke="#fff" strokeWidth="1.200" />
          <path d="M14 5 H17 V8 H14 Z" fill="#fff" />
        </svg>
      </TaskButton>
      <span className="w-px" />
      <TaskButton label="Edge" running><EdgeLogo size={24} /></TaskButton>
      <TaskButton label="File Explorer" active running><Folder size={22} /></TaskButton>
      <TaskButton label="Firefox"><FirefoxLogo size={24} /></TaskButton>
      <TaskButton label="Task Manager" running>
        <svg {...svgProps} width="24" height="24" viewBox="0 0 24 24">
          <path d="M3 4 L15 1 L23 5 V16 L17 18 L18 22 L12 23 L6 20 L1 18 V8 Z" fill="#b9c3c9" />
          <path d="M5 5 L21 3 V15 L5 17 Z" fill="#e9eef0" stroke="#8e9aa1" />
          <path d="M6 14 L9 8 L11 12 L14 6 L16 12 L20 8" stroke="#5a9cb5" />
          <circle cx="16" cy="19" r="3" fill="#d3d9dc" />
        </svg>
      </TaskButton>
    </div>
    <div className="ml-auto flex items-center">
      <button aria-label="Show hidden icons" className="flex w-6 justify-center">
        <svg {...svgProps} width="12" height="8" viewBox="0 0 12 8"><path d="M.5 7 L6 1.500 L11.500 7" stroke="#fff" strokeWidth="1.300" /></svg>
      </button>
      <button aria-label="Meet now" className="flex w-6 justify-center">
        <svg {...svgProps} width="12" height="16" viewBox="0 0 12 16">
          <path d="M2 2 Q6 -1 10 2 M2 14 Q6 17 10 14" stroke="#fff" />
          <rect x="1" y="4.500" width="7" height="7" rx="1.500" stroke="#fff" strokeWidth="1.200" />
          <path d="M8 7 L11 5 V11 L8 9" stroke="#fff" />
        </svg>
      </button>
      <button aria-label="Network" className="flex w-6 justify-center">
        <svg {...svgProps} width="16" height="14" viewBox="0 0 16 14">
          <path d="M5 2.500 H15.500 V10.500 H4.500 V6 M10 10.500 V13 M6.500 13.500 H13.500" stroke="#fff" />
          <path d="M.5 .5 H4.500 V5.500 H.5 Z M2.500 5.500 V13.500 H5" stroke="#fff" />
        </svg>
      </button>
      <button aria-label="Volume" className="flex w-6 justify-center">
        <svg {...svgProps} width="17" height="14" viewBox="0 0 17 14">
          <path d="M.5 5 H3 L6.500 2 V12 L3 9 H.5 Z M9 5 Q10 7 9 9 M11 3 Q13.500 7 11 11 M13.500 1 Q17.500 7 13.500 13" stroke="#fff" strokeWidth="1.100" />
        </svg>
      </button>
      <time className="w-16 text-center text-[11px] leading-[18px]">10:52 PM<br />1/9/2025</time>
      <button aria-label="Notifications" className="flex w-10 justify-center">
        <svg {...svgProps} width="16" height="16" viewBox="0 0 16 16"><path d="M.5 1.500 H15.500 V12.500 H10.500 L8 15 L5.500 12.500 H.5 Z" stroke="#fff" strokeWidth="1.100" /></svg>
      </button>
      <span className="ml-2 h-10 w-[5px] border-l border-[#5b6470]" />
    </div>
  </footer>
);

export default function App() {
  return (
    <div className="flex h-screen w-full flex-col overflow-hidden font-['Open_Sans','Noto_Sans',sans-serif]">
      <main className="relative min-h-0 flex-1 overflow-hidden bg-[linear-gradient(to_bottom,rgba(0,110,255,0.14),transparent_45%),linear-gradient(to_right,#00b1ff_20%,#007fe6_54%,#0058cc_78%,#043fb4)]">
        <DesktopIcons />
        <TaskManager />
        <Explorer />
        <PermissionDialog />
        <Watermark />
      </main>
      <Taskbar />
    </div>
  );
}
